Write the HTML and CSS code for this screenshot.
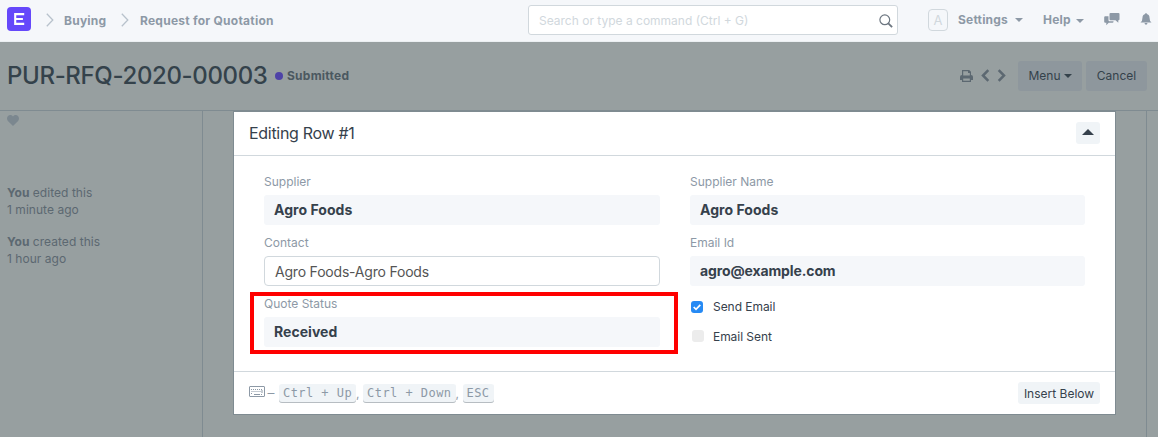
FILE: index.html
```html
<!DOCTYPE html>
<html lang="en">
<head>
<meta charset="utf-8">
<title>Request for Quotation</title>
<link rel="stylesheet" href="styles.css">
</head>
<body>
<header class="navbar">
  <div class="logo"><svg width="24" height="24" viewBox="0 0 24 24"><path d="M7.2 7.1h10M7.2 12h8.7M7.2 16.9h10M8.2 6v12" fill="none" stroke="#fff" stroke-width="2.1"/></svg></div>
  <svg class="crumb-arrow" width="8" height="14" viewBox="0 0 8 14"><path d="M.8.7 6.8 7l-6 6.3"/></svg>
  <a class="crumb buying">Buying</a>
  <svg class="crumb-arrow" width="8" height="14" viewBox="0 0 8 14"><path d="M.8.7 6.8 7l-6 6.3"/></svg>
  <a class="crumb rfq">Request for Quotation</a>
  <div class="search"><span>Search or type a command (Ctrl + G)</span>
    <svg width="14" height="14" viewBox="0 0 14 14" fill="none" stroke="#6c7680"><circle cx="5.8" cy="5.8" r="4.9" stroke-width="1.2"/><path d="m9.3 9.3 3.8 3.9" stroke-width="1.8"/></svg>
  </div>
  <div class="avatar">A</div>
  <a class="nav-link settings">Settings<i class="caret"></i></a>
  <a class="nav-link help">Help<i class="caret"></i></a>
  <svg class="chat" width="16" height="13" viewBox="0 0 16 13" fill="#8d99a6"><path d="M6.500 0h8q1 0 1 1v5.300q0 1-1 1h-.2v2.500L11.500 7.300h-5q-1 0-1-1V1q0-1 1-1z"/><path d="M1.200 3.200h3.300v4.100q0 1 1 1h4v.5q0 1-1 1H4.700L2.300 12.300V9.800H1.200q-1 0-1-1V4.200q0-1 1-1z"/></svg>
  <svg class="bell" width="12" height="12" viewBox="0 0 12 12" fill="#8d99a6"><path d="M6 0q.8 0 .8.900 2.700.5 2.700 3.600 0 3.600 2 5H.5q2-1.400 2-5 0-3.100 2.700-3.600Q5.200 0 6 0zM4.500 10h3Q7.300 11.700 6 11.700T4.500 10z"/></svg>
</header>
<section class="page-head">
  <h1>PUR-RFQ-2020-00003</h1>
  <i class="dot"></i><span class="status">Submitted</span>
  <div class="actions">
    <svg class="printer" width="13" height="12" viewBox="0 0 13 12"><path fill="#5c6871" fill-rule="evenodd" d="M2 0h7.200L11 1.800V5q2 .2 2 2v3h-2v2H2v-2H0V7q0-1.800 2-2zM3.200 1.200v4.300h6.600V3H8V1.200zM3.200 8.500v2.300h6.600V8.500z"/></svg>
    <svg class="prev" width="9" height="13" viewBox="0 0 9 13"><path d="M7.300 1.200 2 6.500l5.300 5.300"/></svg>
    <svg class="next" width="9" height="13" viewBox="0 0 9 13"><path d="M1.700 1.200 7 6.500l-5.300 5.300"/></svg>
    <button class="btn menu">Menu<i class="caret"></i></button>
    <button class="btn cancel">Cancel</button>
  </div>
</section>
<main class="page-body">
  <aside class="sidebar">
    <svg class="heart" width="12" height="11" viewBox="0 0 12 11"><path fill="#7b878f" d="M6 11 .9 5.900Q-.7 3.600.6 1.500C2-.6 4.900-.5 6 1.500 7.100-.5 10-.6 11.400 1.500q1.300 2.100-.3 4.400z"/></svg>
    <p><b>You</b> edited this<br>1 minute ago</p>
    <p><b>You</b> created this<br>1 hour ago</p>
  </aside>
  <div class="content">
    <div class="row-form">
      <div class="form-head"><span>Editing Row #1</span><button class="collapse"><i></i></button></div>
      <div class="form-body">
        <div class="column">
          <label>Supplier</label><div class="value">Agro Foods</div>
          <label>Contact</label><div class="value input">Agro Foods-Agro Foods</div>
          <label>Quote Status</label><div class="value">Received</div>
        </div>
        <div class="column">
          <label>Supplier Name</label><div class="value">Agro Foods</div>
          <label>Email Id</label><div class="value email">agro@example.com</div>
          <div class="check"><span class="box on"><svg width="12" height="12" viewBox="0 0 12 12"><path d="m2.700 6 2.300 2.300 4.300-4.500" fill="none" stroke="#fff" stroke-width="1.700"/></svg></span>Send Email</div>
          <div class="check sent"><span class="box"></span>Email Sent</div>
        </div>
        <div class="highlight"></div>
      </div>
      <div class="form-foot">
        <svg class="keyboard" width="16" height="11" viewBox="0 0 16 11" fill="none" stroke="#8d99a6"><rect x=".5" y=".5" width="15" height="10" rx=".5"/><path d="M2 3.500h12M2.500 5.500h9M2 7.500h2M12 8.500h2" stroke-dasharray="1 1"/><path d="M5 8.500h6M13 4v3"/></svg>
        <span class="dash">–</span><kbd>Ctrl + Up</kbd><span class="comma">,</span><kbd>Ctrl + Down</kbd><span class="comma">,</span><kbd>ESC</kbd>
        <button class="insert">Insert Below</button>
      </div>
    </div>
  </div>
</main>
</body>
</html>
```
FILE: styles.css
```css
* { box-sizing: border-box; }
body { margin: 0; height: 437px; overflow: hidden; display: flex; flex-direction: column; font: 12px/17px Inter, "Open Sans", sans-serif; color: #36414c; background: #979fa0; }
svg { display: block; flex: none; }
button { border: 0; padding: 0; font: inherit; color: inherit; }
.navbar { height: 42px; flex: none; display: flex; align-items: center; padding: 0 6px 2px 7px; background: #f5f7fa; border-bottom: 1px solid #ebeff2; color: #8d99a6; font-weight: 700; white-space: nowrap; }
.logo { width: 24px; height: 24px; border-radius: 4px; background: #6548fa; margin: -1px 15px 0 0; }
.crumb-arrow { fill: none; stroke: #b8c2cc; stroke-width: 1.3; }
.crumb { margin-left: 10px; padding-top: 1px; letter-spacing: .24px; }
.buying { width: 57px; }
.rfq { width: 388px; margin-left: 11px; }
.search { width: 370px; height: 30px; display: flex; align-items: center; justify-content: space-between; padding: 1px 4px 0 10px; background: #fff; border: 1px solid #d1d8dd; border-radius: 3px; color: #d1d8dd; font-weight: 400; }
.search svg { margin-top: 1px; }
.avatar { width: 20px; height: 22px; margin-left: 30px; border: 1px solid #d1d8dd; border-radius: 4px; color: #d1d8dd; font-size: 13px; font-weight: 400; line-height: 21px; text-align: center; }
.nav-link { display: flex; align-items: center; letter-spacing: .2px; }
.settings { margin-left: 10px; width: 85px; }
.help { width: 61px; }
.nav-link .caret { margin-left: auto; }
.settings .caret { margin-right: 20px; }
.help .caret { margin-right: 20px; margin-top: 2px; }
.caret { border: 4px solid transparent; border-bottom: 0; border-top-color: currentColor; }
.bell { margin-left: auto; margin-top: -1px; }
.page-head { height: 69px; flex: none; display: flex; align-items: center; padding: 0 11px 1px 7px; border-bottom: 1px solid #7f8b91; }
h1 { width: 268px; margin: 0; font-size: 24px; line-height: 30px; font-weight: 500; letter-spacing: -.36px; color: #34424b; white-space: nowrap; }
.dot { width: 8px; height: 8px; border-radius: 50%; background: #4e42a7; }
.status { margin-left: 4px; color: #4b5860; font-weight: 700; letter-spacing: .25px; }
.actions { margin-left: auto; display: flex; align-items: center; }
.prev, .next { fill: none; stroke: #5c6871; stroke-width: 2.5; }
.prev { margin-left: 8px; }
.next { margin-left: 7px; }
.btn { height: 30px; border-radius: 3px; background: #8e979d; display: flex; align-items: center; justify-content: center; color: #34424b; }
.menu { width: 64px; margin-left: 12px; }
.menu .caret { margin-left: 3px; }
.cancel { width: 61px; margin-left: 4px; }
.page-body { flex: 1; display: flex; }
.sidebar { width: 203px; border-right: 1px solid #7f8b91; padding: 4px 0 0 7px; color: #5c6871; }
.sidebar p { margin: 0 0 15px; letter-spacing: .04px; }
.heart + p { margin-top: 58px; }
.content { width: 944px; border-right: 1px solid #7f8b91; padding-left: 30px; }
.row-form { width: 883px; height: 304px; border: 1px solid #7f8b91; background: #fff; display: flex; flex-direction: column; }
.form-head { height: 44px; display: flex; align-items: center; justify-content: space-between; padding: 0 15px; border-bottom: 1px solid #d1d8dd; font-size: 16px; letter-spacing: -.3px; }
.collapse { width: 24px; height: 22px; border-radius: 3px; background: #f0f4f7; display: flex; justify-content: center; align-items: center; margin-top: -1px; }
.collapse i { border: 6px solid transparent; border-top: 0; border-bottom-color: #36414c; margin-top: -3px; }
.form-body { position: relative; height: 216px; display: grid; grid-template-columns: 396px 395px; column-gap: 30px; padding: 17px 30px 0; border-bottom: 1px solid #d1d8dd; }
.column { display: flex; flex-direction: column; }
label { height: 18px; margin-bottom: 4px; color: #8d99a6; line-height: 18px; }
.value { height: 30px; margin-bottom: 9px; padding: 0 10px; border-radius: 3px; background: #f5f7fa; font-size: 14px; font-weight: 700; letter-spacing: .04px; line-height: 30px; }
.email { letter-spacing: -.12px; }
.input { border: 1px solid #d1d8dd; border-radius: 4px; background: #fff; color: #555; font-weight: 400; letter-spacing: -.2px; }
.check { height: 30px; display: flex; align-items: center; margin-top: -4px; letter-spacing: -.05px; }
.sent { margin-top: 0; }
.box { width: 12px; height: 12px; border-radius: 3px; background: #ececec; margin: 0 9px 0 2px; }
.on { background: #268af4; margin: 1px 10px 0 1px; }
.highlight { position: absolute; left: 16px; top: 136px; width: 428px; height: 62px; border: 4px solid #f00; }
.form-foot { height: 42px; display: flex; align-items: center; padding: 0 15px; color: #8d99a6; }
.keyboard { margin-top: -3px; }
.dash { width: 8px; margin: -2px 3px 0; transform: scaleX(1.15); }
kbd { height: 19px; padding: 0 4px; border-radius: 3px; background: #f0f4f7; box-shadow: inset 0 -1px #b7bdc2; font: 12px/19px "DejaVu Sans Mono", monospace; letter-spacing: .45px; }
.comma { width: 4px; margin: 0 3px 0 0; }
.insert { width: 82px; height: 22px; margin-left: auto; border-radius: 3px; background: #f0f4f7; color: #36414c; }
```
